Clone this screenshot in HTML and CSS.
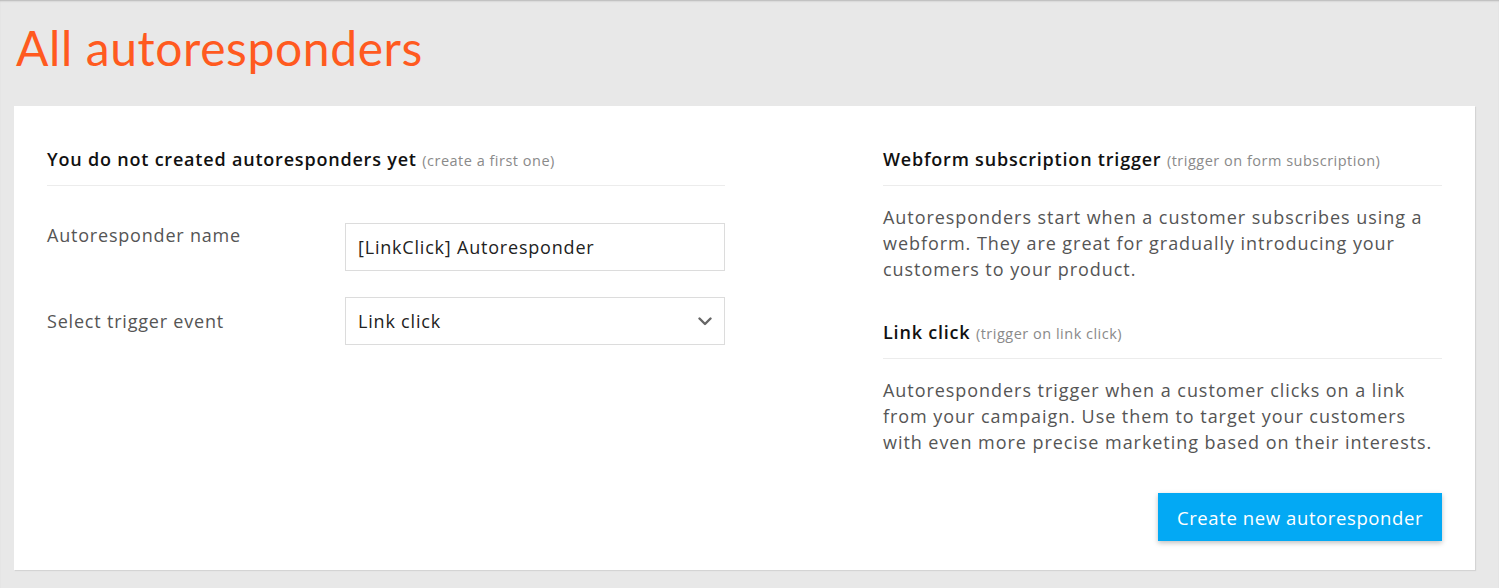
FILE: index.html
```html
<!DOCTYPE html>
<html lang="en">
<head>
<meta charset="utf-8">
<title>All autoresponders</title>
<link rel="stylesheet" href="styles.css">
</head>
<body>
<div class="page">
  <h1 class="title">All autoresponders</h1>
  <div class="card">
    <div class="col-left">
      <div class="section-head">You do not created autoresponders yet <span class="hint">(create a first one)</span></div>
      <div class="form">
        <div class="row row-name">
          <label class="label label-top">Autoresponder name</label>
          <div class="field"><span class="field-text">[LinkClick] Autoresponder</span></div>
        </div>
        <div class="row">
          <label class="label">Select trigger event</label>
          <div class="field select">
            <span class="field-text">Link click</span>
            <svg class="chevron" width="14" height="9" viewBox="0 0 14 9"><path d="M1.5 1.5 L7 7 L12.5 1.5" fill="none" stroke="#666" stroke-width="2.4" stroke-linecap="round" stroke-linejoin="round"/></svg>
          </div>
        </div>
      </div>
    </div>
    <div class="col-right">
      <div class="section-head">Webform subscription trigger <span class="hint">(trigger on form subscription)</span></div>
      <p class="desc">Autoresponders start when a customer subscribes using a webform. They are great for gradually introducing your customers to your product.</p>
      <div class="section-head second">Link click <span class="hint">(trigger on link click)</span></div>
      <p class="desc">Autoresponders trigger when a customer clicks on a link from your campaign. Use them to target your customers with even more precise marketing based on their interests.</p>
      <div class="actions">
        <button class="btn">Create new autoresponder</button>
      </div>
    </div>
  </div>
</div>
</body>
</html>
```
FILE: styles.css
```css
* { box-sizing: border-box; }
html, body {
  margin: 0;
  padding: 0;
  background: #e8e8e8;
  font-family: "Open Sans", "Noto Sans", sans-serif;
}
body {
  box-shadow: inset 0 2px 2px -1px #b5b5b5;
  min-height: 588px;
}
.page {
  padding: 20px 24px 0 14px;
}
.title {
  margin: 0 0 30px 2px;
  font-family: "Lato", sans-serif;
  font-size: 48px;
  line-height: 56px;
  font-weight: 400;
  color: #ff5a1f;
  letter-spacing: 0.6px;
}
.card {
  background: #fff;
  width: 1461px;
  padding: 41px 33px 29px 33px;
  display: grid;
  grid-template-columns: 678px 559px;
  column-gap: 158px;
  box-shadow: 1px 1px 1px #d4d4d4;
}
.section-head {
  font-size: 18px;
  line-height: 24px;
  color: #111;
  font-weight: 600;
  padding-bottom: 12px;
  border-bottom: 1px solid #ececec;
  letter-spacing: 0.8px;
}
.section-head.second {
  margin-top: 38px;
}
.hint {
  font-size: 14.5px;
  font-weight: 400;
  color: #8a8a8a;
  letter-spacing: 0.5px;
}
.form {
  display: flex;
  flex-direction: column;
  gap: 26px;
  margin-top: 37px;
}
.row {
  display: flex;
  align-items: center;
}
.row-name { align-items: flex-start; }
.label {
  width: 298px;
  font-size: 18px;
  color: #555;
  letter-spacing: 0.8px;
}
.label-top { padding-top: 0; }
.field {
  width: 380px;
  height: 48px;
  border: 1px solid #dcdcdc;
  display: flex;
  align-items: center;
  padding: 0 12px;
  font-size: 18px;
  color: #222;
  letter-spacing: 0.8px;
}
.select { justify-content: space-between; }
.desc {
  margin: 18px 0 0 0;
  font-size: 18px;
  line-height: 26px;
  color: #555;
  letter-spacing: 0.95px;
}
.actions {
  display: flex;
  justify-content: flex-end;
  margin-top: 38px;
}
.btn {
  width: 284px;
  height: 48px;
  border: none;
  background: #03a9f4;
  color: #fff;
  font-family: inherit;
  font-size: 18.5px;
  letter-spacing: 0.6px;
  box-shadow: 0 2px 5px rgba(0,0,0,0.25);
  cursor: pointer;
}
```
